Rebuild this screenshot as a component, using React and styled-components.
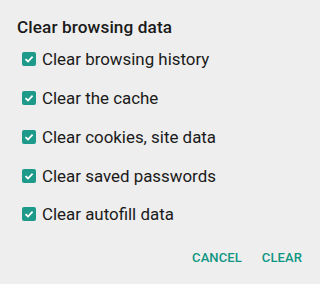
import React from "react";
import styled, { createGlobalStyle } from "styled-components";

const Global = createGlobalStyle`
  html, body { margin: 0; padding: 0; background: #eeeeee; }
  body { font-family: Roboto, "Liberation Sans", sans-serif; }
`;

const Dialog = styled.div`
  width: 320px;
  height: 284px;
  box-sizing: border-box;
  background: #eeeeee;
  padding: 17px 18px 0 17px;
  display: flex;
  flex-direction: column;
`;

const Title = styled.h1`
  margin: 0;
  font-size: 17.2px;
  font-weight: 500;
  color: #1a1a1a;
  line-height: 20px;
  letter-spacing: 0.1px;
`;

const List = styled.div`
  display: flex;
  flex-direction: column;
  margin-top: 3px;
  padding-left: 5px;
`;

const Row = styled.label`
  display: flex;
  align-items: center;
  gap: 6px;
  height: 38.75px;
  font-size: 16.9px;
  color: #1a1a1a;
`;

const Box = styled.span`
  width: 14px;
  height: 14px;
  border-radius: 2px;
  background: #1e9a8a;
  display: flex;
  align-items: center;
  justify-content: center;
  flex: none;
`;

const Actions = styled.div`
  display: flex;
  justify-content: flex-end;
  gap: 20px;
  margin-top: 15px;
  padding-right: 0;
`;

const Button = styled.button`
  background: none;
  border: none;
  padding: 0;
  font-family: Roboto, "Liberation Sans", sans-serif;
  font-weight: 500;
  font-size: 13px;
  color: #0f9683;
  letter-spacing: 0.1px;
  line-height: 18px;
`;

const items = [
  "Clear browsing history",
  "Clear the cache",
  "Clear cookies, site data",
  "Clear saved passwords",
  "Clear autofill data",
];

const Check = () => (
  <svg width="10" height="10" viewBox="0 0 10 10">
    <path d="M1.5 5.2 L4 7.5 L8.6 2.6" fill="none" stroke="#fff" strokeWidth="1.8" />
  </svg>
);

export default function App() {
  return (
    <>
      <Global />
      <Dialog>
        <Title>Clear browsing data</Title>
        <List>
          {items.map((t) => (
            <Row key={t}>
              <Box>
                <Check />
              </Box>
              {t}
            </Row>
          ))}
        </List>
        <Actions>
          <Button>CANCEL</Button>
          <Button>CLEAR</Button>
        </Actions>
      </Dialog>
    </>
  );
}
